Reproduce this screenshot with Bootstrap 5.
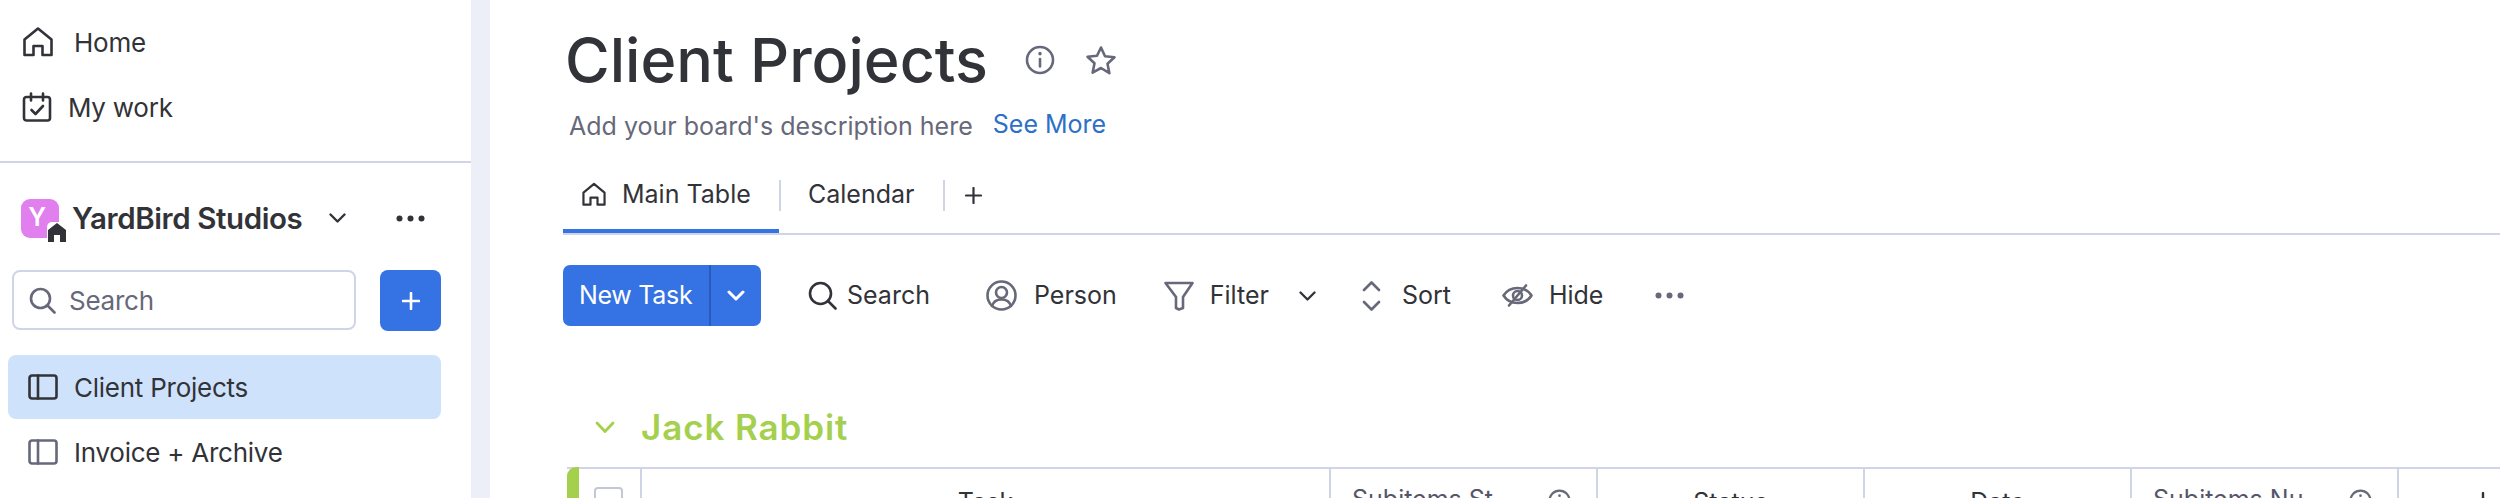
<!DOCTYPE html>
<html lang="en">
<head>
  <meta charset="UTF-8">
  <title>Client Projects</title>
  <link href="https://cdn.jsdelivr.net/npm/bootstrap@5.3.0/dist/css/bootstrap.min.css" rel="stylesheet">
  <style>
    html, body { height: 498px; overflow: hidden; }
    body { background: #fff; color: #323338; font-family: "Inter", "Noto Sans", sans-serif; font-size: 25px; }
    svg { display: block; flex: none; fill: none; stroke-linecap: round; stroke-linejoin: round; }

    .side-panel { width: 471px; flex: none; font-size: 26px; letter-spacing: -0.25px; }
    .side-top { height: 163px; padding: 22px 0 0 22px; border-bottom: 2px solid #d0d4e7; }
    .side-link { height: 40px; margin-bottom: 25px; }
    .ws-row { height: 42px; margin-top: 34px; padding: 0 46px 0 21px; }
    .ws-logo { width: 38px; height: 39px; background: #e17fee; border-radius: 9px; color: #fff; font-size: 25px; font-weight: 600; line-height: 37px; text-align: center; padding-right: 6px; }
    .ws-badge { position: absolute; right: -8px; bottom: -5px; background: #fff; border-radius: 5px; padding: 1px; }
    .ws-name { font-size: 29.5px; font-weight: 600; margin-left: 13px; letter-spacing: -0.4px; white-space: nowrap; }
    .ws-caret { margin-left: 27px; }
    .search-row { margin-top: 31px; }
    .side-search { width: 344px; height: 60px; margin-left: 12px; border: 2px solid #d0d4e7; border-radius: 8px; color: #676879; padding-left: 15px; gap: 13px; }
    .add-btn { width: 61px; height: 61px; margin-left: 24px; background: #3572e3; border-radius: 8px; }
    .board-item { height: 64px; margin: 0 30px 0 8px; padding-left: 20px; border-radius: 8px; }
    .board-active { background: #cfe2fb; margin-top: 24px; }
    .board-next { margin-top: 1px; }

    .gutter { width: 19px; flex: none; background: #eceff8; }
    .board-main { padding-left: 73px; min-width: 0; height: 498px; overflow: hidden; }
    .title-row { height: 70px; margin-top: 25px; margin-left: 2px; }
    .board-title { font-size: 61px; font-weight: 500; line-height: 70px; margin: 0 37px 0 0; white-space: nowrap; }
    .star-icon { margin-left: 30px; }
    .desc-row { height: 32px; margin: 16px 0 0 6px; color: #676879; }
    .see-more { color: #2e6fc7; text-decoration: none; margin-left: 20px; position: relative; top: -2px; }

    .tab-row { height: 65px; margin-top: 27px; padding-bottom: 13px; border-bottom: 2px solid #d0d4e7; }
    .tab-home { width: 216px; height: 63px; padding: 0 0 10px 18px; gap: 15px; border-bottom: 4px solid #3572e3; margin-bottom: -13px; flex: none; }
    .tab-sep { width: 2px; height: 31px; background: #d0d4e7; }
    .tab-label { margin: 0 29px 0 27px; }
    .tab-add { margin-left: 20px; }

    .tool-row { height: 61px; margin-top: 30px; }
    .new-task { width: 198px; height: 61px; background: #3572e3; border-radius: 7px; color: #fff; letter-spacing: -0.3px; }
    .new-task-label { width: 146px; padding-left: 16px; white-space: nowrap; }
    .new-task-drop { flex: 1; height: 100%; border-left: 2px solid #2a5bb8; }
    .tool-item { white-space: nowrap; }
    .tool-search-ic { margin-left: 47px; }
    .tool-search-tx { margin-left: 10px; }
    .tool-person-ic { margin-left: 56px; }
    .tool-person-tx { margin-left: 17px; }
    .tool-filter-ic { margin-left: 47px; }
    .tool-filter-tx { margin-left: 16px; }
    .tool-filter-ch { margin-left: 30px; }
    .tool-sort-ic { margin-left: 46px; }
    .tool-sort-tx { margin-left: 21px; }
    .tool-hide-ic { margin-left: 51px; }
    .tool-hide-tx { margin-left: 16px; }
    .tool-more { margin-left: 52px; }

    .group-row { height: 40px; margin: 81px 0 0 32px; color: #a5d04e; font-size: 35px; font-weight: 600; letter-spacing: 0.9px; }
    .group-name { margin-left: 26px; white-space: nowrap; }
    .tbl-head { height: 70px; margin: 20px 0 0 4px; border-top: 2px solid #d0d4e7; }
    .tbl-bar { width: 12px; flex: none; background: #a5d04e; border-top-left-radius: 9px; margin-top: -2px; }
    .tbl-check { width: 61px; flex: none; padding: 18px 0 0 15px; }
    .check-box { width: 29px; height: 29px; border: 2px solid #c3c6d4; border-radius: 4px; }
    .tbl-cell { flex: none; width: 267px; border-left: 2px solid #d0d4e7; padding-top: 17px; text-align: center; white-space: nowrap; line-height: 32px; position: relative; }
    .tbl-task { width: 689px; }
    .tbl-left { text-align: left; padding: 14px 0 0 21px; color: #55566a; }
    .tbl-info { position: absolute; right: 25px; top: 20px; }
    .tbl-add { flex: 1; min-width: 0; padding: 23px 0 0 74px; }
  </style>
</head>
<body class="d-flex">

  <aside class="side-panel">
    <div class="side-top">
      <div class="side-link d-flex align-items-center gap-3">
        <svg width="32" height="32" viewBox="0 0 32 32" stroke="#323338" stroke-width="2.6"><path d="M2.500 13.500 16 2.500l13.500 11v15.500h-9v-9h-9v9h-9z"/></svg>
        <span class="ms-1">Home</span>
      </div>
      <div class="side-link d-flex align-items-center gap-3">
        <svg width="30" height="30" viewBox="0 0 30 30" stroke="#323338" stroke-width="2.6"><rect x="2" y="5" width="26" height="23.500" rx="2.500"/><path d="M9 1.500v7M21 1.500v7M9.500 18l4 4 7.500-8"/></svg>
        <span>My work</span>
      </div>
    </div>

    <div class="ws-row d-flex align-items-center">
      <div class="ws-logo position-relative">Y
        <div class="ws-badge"><svg width="18" height="19" viewBox="0 0 18 19"><path fill="#323338" d="M9 0 18 7v12h-6v-7H6v7H0V7z"/></svg></div>
      </div>
      <span class="ws-name">YardBird Studios</span>
      <svg class="ws-caret" width="17" height="10" viewBox="0 0 17 10" stroke="#323338" stroke-width="2.4"><path d="m1.500 1.500 7 7 7-7"/></svg>
      <svg class="ms-auto" width="29" height="7" viewBox="0 0 29 7"><circle cx="3.500" cy="3.500" r="3" fill="#323338"/><circle cx="14.500" cy="3.500" r="3" fill="#323338"/><circle cx="25.500" cy="3.500" r="3" fill="#323338"/></svg>
    </div>

    <div class="search-row d-flex">
      <div class="side-search d-flex align-items-center">
        <svg width="27" height="27" viewBox="0 0 27 27" stroke="#676879" stroke-width="2.6"><circle cx="11.500" cy="11.500" r="9.500"/><path d="m18.500 18.500 7 7"/></svg>
        <span>Search</span>
      </div>
      <div class="add-btn d-flex align-items-center justify-content-center">
        <svg width="18" height="18" viewBox="0 0 18 18" stroke="#fff" stroke-width="2.6"><path d="M9 1v16M1 9h16"/></svg>
      </div>
    </div>

    <div class="board-item board-active d-flex align-items-center gap-3">
      <svg width="30" height="26" viewBox="0 0 30 26" stroke="#323338" stroke-width="2.6"><rect x="1.500" y="1.500" width="27" height="23" rx="2.500"/><path d="M10 1.500v23"/></svg>
      <span>Client Projects</span>
    </div>
    <div class="board-item board-next d-flex align-items-center gap-3">
      <svg width="30" height="26" viewBox="0 0 30 26" stroke="#676879" stroke-width="2.6"><rect x="1.500" y="1.500" width="27" height="23" rx="2.500"/><path d="M10 1.500v23"/></svg>
      <span>Invoice + Archive</span>
    </div>
  </aside>

  <div class="gutter"></div>

  <main class="board-main flex-grow-1">
    <div class="title-row d-flex align-items-center">
      <h1 class="board-title">Client Projects</h1>
      <svg width="30" height="30" viewBox="0 0 30 30" stroke="#676879" stroke-width="2.6"><circle cx="15" cy="15" r="13"/><path d="M15 14v7.500"/><path d="M15 8.500v.3" stroke-width="3.4"/></svg>
      <svg class="star-icon" width="32" height="31" viewBox="0 0 32 31" stroke="#676879" stroke-width="2.6"><path d="m16 2.500 4 8.700 9.500 1.100-7 6.500 1.900 9.400L16 23l-8.400 4.700 1.900-9.400-7-6.500 9.500-1.100z"/></svg>
    </div>
    <div class="desc-row d-flex align-items-center">
      <span>Add your board's description here</span>
      <a class="see-more" href="#">See More</a>
    </div>

    <div class="tab-row d-flex align-items-center">
      <div class="tab-home d-flex align-items-center">
        <svg width="26" height="25" viewBox="0 0 32 32" stroke="#323338" stroke-width="2.8"><path d="M2.500 13.500 16 2.500l13.500 11v15.500h-9v-9h-9v9h-9z"/></svg>
        <span>Main Table</span>
      </div>
      <div class="tab-sep"></div>
      <span class="tab-label">Calendar</span>
      <div class="tab-sep"></div>
      <svg class="tab-add" width="17" height="17" viewBox="0 0 17 17" stroke="#323338" stroke-width="2.2"><path d="M8.500 1v15M1 8.500h15"/></svg>
    </div>

    <div class="tool-row d-flex align-items-center">
      <div class="new-task d-flex align-items-center">
        <div class="new-task-label">New Task</div>
        <div class="new-task-drop d-flex align-items-center justify-content-center">
          <svg width="18" height="11" viewBox="0 0 18 11" stroke="#fff" stroke-width="3"><path d="m2 2 7 7 7-7"/></svg>
        </div>
      </div>
      <svg class="tool-search-ic" width="29" height="29" viewBox="0 0 29 29" stroke="#323338" stroke-width="2.6"><circle cx="12.500" cy="12.500" r="10.500"/><path d="m20 20 7.500 7.500"/></svg>
      <span class="tool-item tool-search-tx">Search</span>
      <svg class="tool-person-ic" width="31" height="31" viewBox="0 0 31 31" stroke="#676879" stroke-width="2.6"><circle cx="15.500" cy="15.500" r="14"/><circle cx="15.500" cy="12.500" r="5.500"/><path d="M6 26c1.500-5 5-6.500 9.500-6.500S23.500 21 25 26"/></svg>
      <span class="tool-item tool-person-tx">Person</span>
      <svg class="tool-filter-ic" width="30" height="30" viewBox="0 0 30 30" stroke="#676879" stroke-width="2.6"><path d="M1.500 2h27l-9.500 14v11l-4 1.500-3-1.500V16z"/></svg>
      <span class="tool-item tool-filter-tx">Filter</span>
      <svg class="tool-filter-ch" width="17" height="10" viewBox="0 0 17 10" stroke="#323338" stroke-width="2.3"><path d="m1.500 1.500 7 7 7-7"/></svg>
      <svg class="tool-sort-ic" width="19" height="30" viewBox="0 0 19 30" stroke="#676879" stroke-width="2.6"><path d="m2 9 7.500-7.500L17 9M2 21l7.500 7.500L17 21"/></svg>
      <span class="tool-item tool-sort-tx">Sort</span>
      <svg class="tool-hide-ic" width="31" height="23" viewBox="0 0 31 23" stroke="#676879" stroke-width="2.6"><path d="M1.500 11.500C5 6 10 4 15.500 4s10.500 2 14 7.500c-3.500 5.500-8.500 7.500-14 7.500s-10.500-2-14-7.500z"/><circle cx="15.500" cy="11.500" r="4.500"/><path d="M24 1.500 7 21.500"/></svg>
      <span class="tool-item tool-hide-tx">Hide</span>
      <svg class="tool-more" width="29" height="7" viewBox="0 0 29 7"><circle cx="3.500" cy="3.500" r="3" fill="#676879"/><circle cx="14.500" cy="3.500" r="3" fill="#676879"/><circle cx="25.500" cy="3.500" r="3" fill="#676879"/></svg>
    </div>

    <div class="group-row d-flex align-items-center">
      <svg width="20" height="13" viewBox="0 0 20 13" stroke="#a5d04e" stroke-width="2.8"><path d="m2 2 8 8.500L18 2"/></svg>
      <span class="group-name">Jack Rabbit</span>
    </div>

    <div class="tbl-head d-flex">
      <div class="tbl-bar"></div>
      <div class="tbl-check"><div class="check-box"></div></div>
      <div class="tbl-cell tbl-task">Task</div>
      <div class="tbl-cell tbl-left">Subitems St
        <svg class="tbl-info" width="23" height="23" viewBox="0 0 30 30" stroke="#676879" stroke-width="3"><circle cx="15" cy="15" r="13"/><path d="M15 14v7.500"/><path d="M15 8.500v.3" stroke-width="3.4"/></svg>
      </div>
      <div class="tbl-cell">Status</div>
      <div class="tbl-cell">Date</div>
      <div class="tbl-cell tbl-left">Subitems Nu
        <svg class="tbl-info" width="23" height="23" viewBox="0 0 30 30" stroke="#676879" stroke-width="3"><circle cx="15" cy="15" r="13"/><path d="M15 14v7.500"/><path d="M15 8.500v.3" stroke-width="3.4"/></svg>
      </div>
      <div class="tbl-cell tbl-add">
        <svg width="20" height="20" viewBox="0 0 20 20" stroke="#323338" stroke-width="2.4"><path d="M10 1v18M1 10h18"/></svg>
      </div>
    </div>
  </main>

</body>
</html>
